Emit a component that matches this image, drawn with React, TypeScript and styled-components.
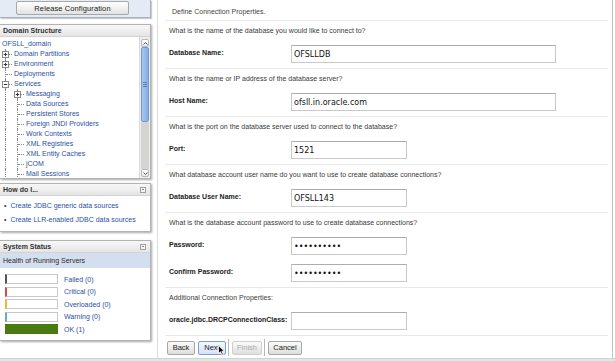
import styled, { createGlobalStyle } from 'styled-components';

const GlobalStyle = createGlobalStyle`
  html, body { margin: 0; padding: 0; background: #fff; }
  body {
    font-family: "Liberation Sans", Arial, sans-serif;
    font-size: 7px;
    color: #333;
  }
  * { box-sizing: border-box; }
`;

const LINK = '#2b50a6';

const Page = styled.div`
  width: 615px;
  height: 361px;
  overflow: hidden;
  display: flex;
  flex-direction: column;
`;

const Main = styled.div`
  display: flex;
  flex: 1;
  min-height: 0;
`;

const BottomStrip = styled.div`
  height: 3px;
  background: #e4e4e4;
  border-top: 1px solid #d2d2d2;
`;

/* ---------- left column ---------- */

const LeftCol = styled.div`
  width: 152px;
  flex: none;
  display: flex;
  flex-direction: column;
`;

const TopBox = styled.div`
  height: 18px;
  width: 151px;
  background: #e4ebf5;
  border-right: 1px solid #a9b2bf;
  border-bottom: 1px solid #a9b2bf;
  box-shadow: 1px 1px 1px rgba(0, 0, 0, 0.2);
  padding: 1px 0 0 16px;
`;

const ReleaseButton = styled.div`
  width: 113px;
  height: 14px;
  border: 1px solid #a8a8a8;
  border-radius: 2px;
  background: linear-gradient(#ffffff, #e2e2e2);
  font-size: 7.5px;
  color: #222;
  display: flex;
  align-items: center;
  justify-content: center;
  letter-spacing: 0.1px;
`;

const Panel = styled.section<{ $top: number; $h: number }>`
  margin-top: ${(p) => p.$top}px;
  height: ${(p) => p.$h}px;
  width: 151px;
  border: 1px solid #b3b3b3;
  border-left: none;
  box-shadow: 1px 1px 2px rgba(0, 0, 0, 0.35);
  background: #fff;
  display: flex;
  flex-direction: column;
  overflow: hidden;
`;

const PanelHeader = styled.div`
  height: 12px;
  flex: none;
  background: linear-gradient(#f7f7f7, #e5e5e5);
  border-bottom: 1px solid #d3d3d3;
  font-weight: bold;
  color: #333;
  padding: 0 4px 0 3px;
  display: flex;
  align-items: center;
  justify-content: space-between;
`;

const Collapse = styled.span`
  width: 6px;
  height: 6px;
  border: 1px solid #a0a0a0;
  background: #f4f4f4;
  position: relative;
  &::after {
    content: '';
    position: absolute;
    left: 1px;
    right: 1px;
    top: 1.5px;
    border-top: 1px solid #888;
  }
`;

const TreeBody = styled.div`
  flex: 1;
  display: flex;
  min-height: 0;
`;

const Tree = styled.div`
  flex: 1;
  padding-top: 2px;
  overflow: hidden;
`;

const TreeRow = styled.div`
  height: 10px;
  display: flex;
  align-items: center;
  white-space: nowrap;
`;

const Guide = styled.span`
  position: relative;
  width: 12px;
  height: 10px;
  flex: none;
  &::before {
    content: '';
    position: absolute;
    left: 5px;
    top: 0;
    bottom: 0;
    border-left: 1px dotted #8a8a8a;
  }
`;

const Branch = styled(Guide)`
  &::after {
    content: '';
    position: absolute;
    left: 6px;
    right: 0;
    top: 5px;
    border-top: 1px dotted #8a8a8a;
  }
`;

const ExpanderIcon = styled.svg`
  position: absolute;
  left: 2px;
  top: 2px;
  z-index: 1;
`;

const TreeLabel = styled.span`
  color: ${LINK};
  margin-left: 2px;
  line-height: 10px;
`;

const Scrollbar = styled.div`
  width: 11px;
  flex: none;
  display: flex;
  flex-direction: column;
  padding: 2px 1px 1px 1px;
  background: #eeeeee;
  border-left: 1px solid #dadada;
`;

const ScrollBtn = styled.div`
  height: 8px;
  flex: none;
  border: 1px solid #b9b9b9;
  border-radius: 2px;
  background: linear-gradient(#ffffff, #e8e8e8);
  display: flex;
  align-items: center;
  justify-content: center;
`;

const Thumb = styled.div`
  height: 75px;
  flex: none;
  background: linear-gradient(90deg, #a9c6f0, #86aee8);
  border: 1px solid #6f97d2;
  border-radius: 2px;
  display: flex;
  align-items: center;
  justify-content: center;
`;

const Track = styled.div`
  flex: 1;
  background: #d5d4d2;
`;

const HowList = styled.ul`
  list-style: none;
  margin: 0;
  padding: 5px 0 0 4px;
  display: flex;
  flex-direction: column;
  gap: 4px;
`;

const HowItem = styled.li`
  line-height: 10px;
  color: ${LINK};
  display: flex;
  gap: 4px;
  white-space: nowrap;
  &::before {
    content: '•';
    color: #333;
  }
`;

const HealthBand = styled.div`
  height: 15px;
  flex: none;
  background: #d3deef;
  padding-left: 3px;
  display: flex;
  align-items: center;
  color: #2a2a2a;
`;

const StatusList = styled.div`
  padding: 6px 0 0 5px;
  display: flex;
  flex-direction: column;
  gap: 2.6px;
`;

const StatusRow = styled.div`
  display: flex;
  align-items: center;
  gap: 6px;
  height: 10px;
`;

const Bar = styled.span<{ $color: string; $fill?: boolean }>`
  width: 53px;
  height: 10px;
  border: 1px solid ${(p) => (p.$fill ? p.$color : '#c8c8c8')};
  border-left: 2px solid ${(p) => p.$color};
  background: ${(p) => (p.$fill ? p.$color : '#fff')};
`;

const StatusLabel = styled.span`
  color: ${LINK};
`;

/* ---------- right column ---------- */

const RightCol = styled.div`
  margin-left: 5px;
  width: 456px;
  flex: none;
  border-left: 1px solid #dedede;
  border-right: 1px solid #c4c4c4;
  padding: 0 4px 0 7px;
  display: flex;
  flex-direction: column;
`;

const HeaderRow = styled.div`
  height: 21px;
  border-bottom: 1px solid #e8e8e8;
  padding: 6px 0 0 7px;
  line-height: 11px;
  color: #444;
`;

const Section = styled.div`
  border-bottom: 1px solid #e8e8e8;
  padding: 4px 0 5px 4px;
`;

const Question = styled.div`
  line-height: 11px;
  color: #3a3a3a;
`;

const Field = styled.div`
  display: flex;
  align-items: flex-start;
  margin-top: 9px;
  height: 18px;
`;

const FieldLabel = styled.label`
  width: 122px;
  flex: none;
  font-weight: bold;
  color: #222;
  padding-top: 2px;
  line-height: 11px;
`;

const TextInput = styled.input<{ $w: number }>`
  width: ${(p) => p.$w}px;
  height: 18px;
  margin: 0;
  border: 1px solid #c9c9c9;
  border-top-color: #adadad;
  border-radius: 0;
  padding: 0 2px;
  font-family: "DejaVu Sans", Verdana, sans-serif;
  font-size: 8px;
  color: #111;
  background: #fff;
  outline: none;
`;

const ButtonBar = styled.div`
  display: flex;
  align-items: center;
  padding: 3px 0 0 2px;
`;

const WizButton = styled.div<{ $w: number; $gap: number; $active?: boolean; $disabled?: boolean }>`
  position: relative;
  width: ${(p) => p.$w}px;
  height: 14px;
  margin-right: ${(p) => p.$gap}px;
  border: 1px solid ${(p) => (p.$active ? '#7f9dd0' : p.$disabled ? '#cfcfcf' : '#a6a6a6')};
  border-radius: 2px;
  background: ${(p) =>
    p.$active ? 'linear-gradient(#f4f8ff, #d6e2f5)' : 'linear-gradient(#fbfbfb, #dedede)'};
  color: ${(p) => (p.$disabled ? '#aaa' : '#222')};
  font-size: 7.5px;
  display: flex;
  align-items: center;
  justify-content: center;
`;

const Separator = styled.span<{ $gap: number }>`
  width: 1px;
  height: 17px;
  background: #b8b8b8;
  margin-right: ${(p) => p.$gap}px;
`;

const Cursor = styled.svg`
  position: absolute;
  left: 19px;
  top: 3px;
`;

/* ---------- data ---------- */

type Node = { label: string; depth: number; exp?: '+' | '-' };

const tree: Node[] = [
  { label: 'OFSLL_domain', depth: 0 },
  { label: 'Domain Partitions', depth: 1, exp: '+' },
  { label: 'Environment', depth: 1, exp: '+' },
  { label: 'Deployments', depth: 1 },
  { label: 'Services', depth: 1, exp: '-' },
  { label: 'Messaging', depth: 2, exp: '+' },
  { label: 'Data Sources', depth: 2 },
  { label: 'Persistent Stores', depth: 2 },
  { label: 'Foreign JNDI Providers', depth: 2 },
  { label: 'Work Contexts', depth: 2 },
  { label: 'XML Registries', depth: 2 },
  { label: 'XML Entity Caches', depth: 2 },
  { label: 'jCOM', depth: 2 },
  { label: 'Mail Sessions', depth: 2 },
];

const statuses = [
  { label: 'Failed (0)', color: '#555555' },
  { label: 'Critical (0)', color: '#e0473f' },
  { label: 'Overloaded (0)', color: '#f0b43a' },
  { label: 'Warning (0)', color: '#62afc4' },
  { label: 'OK (1)', color: '#4a7a12', fill: true },
];

function Expander({ kind }: { kind: '+' | '-' }) {
  return (
    <ExpanderIcon width="7" height="7" viewBox="0 0 7 7">
      <rect x="0.5" y="0.5" width="6" height="6" fill="#fff" stroke="#8a8a8a" />
      <line x1="1.8" y1="3.5" x2="5.2" y2="3.5" stroke="#333" strokeWidth="1" />
      {kind === '+' && <line x1="3.5" y1="1.8" x2="3.5" y2="5.2" stroke="#333" strokeWidth="1" />}
    </ExpanderIcon>
  );
}

function TreeNode({ node }: { node: Node }) {
  const guides = [];
  for (let i = 1; i < node.depth; i++) guides.push(<Guide key={i} />);
  return (
    <TreeRow>
      {guides}
      {node.depth > 0 && <Branch>{node.exp && <Expander kind={node.exp} />}</Branch>}
      <TreeLabel>{node.label}</TreeLabel>
    </TreeRow>
  );
}

export default function App() {
  return (
    <Page>
      <GlobalStyle />
      <Main>
        <LeftCol>
          <TopBox>
            <ReleaseButton>Release Configuration</ReleaseButton>
          </TopBox>

          <Panel $top={6} $h={155}>
            <PanelHeader>Domain Structure</PanelHeader>
            <TreeBody>
              <Tree>
                {tree.map((n) => (
                  <TreeNode key={n.label} node={n} />
                ))}
              </Tree>
              <Scrollbar>
                <ScrollBtn>
                  <svg width="5" height="3" viewBox="0 0 5 3">
                    <path d="M0.5 2.5 L2.5 0.5 L4.5 2.5" fill="none" stroke="#555" />
                  </svg>
                </ScrollBtn>
                <Thumb>
                  <svg width="4" height="5" viewBox="0 0 4 5">
                    <path d="M0 0.5H4M0 2.5H4M0 4.5H4" stroke="#5a7fb8" />
                  </svg>
                </Thumb>
                <Track />
                <ScrollBtn>
                  <svg width="5" height="3" viewBox="0 0 5 3">
                    <path d="M0.5 0.5 L2.5 2.5 L4.5 0.5" fill="none" stroke="#555" />
                  </svg>
                </ScrollBtn>
              </Scrollbar>
            </TreeBody>
          </Panel>

          <Panel $top={4} $h={49}>
            <PanelHeader>
              How do I...
              <Collapse />
            </PanelHeader>
            <HowList>
              <HowItem>Create JDBC generic data sources</HowItem>
              <HowItem>Create LLR-enabled JDBC data sources</HowItem>
            </HowList>
          </Panel>

          <Panel $top={8} $h={101}>
            <PanelHeader>
              System Status
              <Collapse />
            </PanelHeader>
            <HealthBand>Health of Running Servers</HealthBand>
            <StatusList>
              {statuses.map((s) => (
                <StatusRow key={s.label}>
                  <Bar $color={s.color} $fill={s.fill} />
                  <StatusLabel>{s.label}</StatusLabel>
                </StatusRow>
              ))}
            </StatusList>
          </Panel>
        </LeftCol>

        <RightCol>
          <HeaderRow>Define Connection Properties.</HeaderRow>

          <Section>
            <Question>What is the name of the database you would like to connect to?</Question>
            <Field>
              <FieldLabel>Database Name:</FieldLabel>
              <TextInput $w={265} readOnly defaultValue="OFSLLDB" />
            </Field>
          </Section>

          <Section>
            <Question>What is the name or IP address of the database server?</Question>
            <Field>
              <FieldLabel>Host Name:</FieldLabel>
              <TextInput $w={265} readOnly defaultValue="ofsll.in.oracle.com" />
            </Field>
          </Section>

          <Section>
            <Question>What is the port on the database server used to connect to the database?</Question>
            <Field>
              <FieldLabel>Port:</FieldLabel>
              <TextInput $w={116} readOnly defaultValue="1521" />
            </Field>
          </Section>

          <Section>
            <Question>What database account user name do you want to use to create database connections?</Question>
            <Field>
              <FieldLabel>Database User Name:</FieldLabel>
              <TextInput $w={116} readOnly defaultValue="OFSLL143" />
            </Field>
          </Section>

          <Section>
            <Question>What is the database account password to use to create database connections?</Question>
            <Field>
              <FieldLabel>Password:</FieldLabel>
              <TextInput $w={116} type="password" readOnly defaultValue="oracle1234" />
            </Field>
            <Field>
              <FieldLabel>Confirm Password:</FieldLabel>
              <TextInput $w={116} type="password" readOnly defaultValue="oracle1234" />
            </Field>
          </Section>

          <Section>
            <Question>Additional Connection Properties:</Question>
            <Field>
              <FieldLabel>oracle.jdbc.DRCPConnectionClass:</FieldLabel>
              <TextInput $w={116} readOnly defaultValue="" />
            </Field>
          </Section>

          <ButtonBar>
            <WizButton $w={28} $gap={3}>Back</WizButton>
            <WizButton $w={28} $gap={2} $active>
              Next
              <Cursor width="7" height="11" viewBox="0 0 7 11">
                <path d="M0.5 0.5 L0.5 8.5 L2.5 6.8 L4 10 L5.3 9.4 L3.9 6.3 L6.5 6.3 Z" fill="#111" stroke="#fff" strokeWidth="0.8" />
              </Cursor>
            </WizButton>
            <Separator $gap={3} />
            <WizButton $w={30} $gap={2} $disabled>Finish</WizButton>
            <Separator $gap={3} />
            <WizButton $w={34} $gap={0}>Cancel</WizButton>
          </ButtonBar>
        </RightCol>
      </Main>
      <BottomStrip />
    </Page>
  );
}
